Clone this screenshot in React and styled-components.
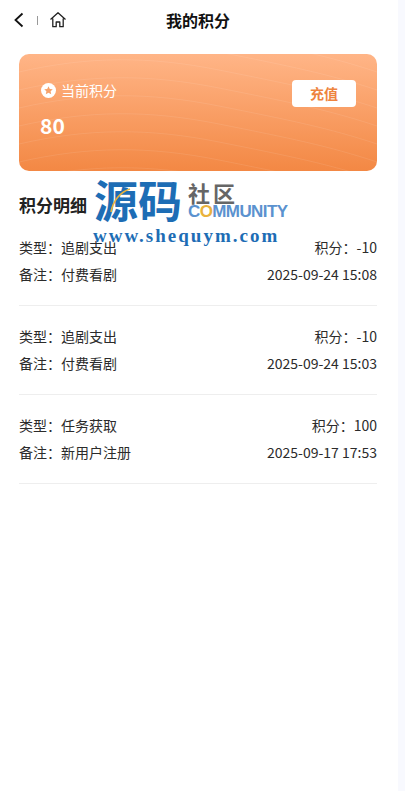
import React from "react";
import styled, { createGlobalStyle } from "styled-components";

const Global = createGlobalStyle`
  html, body { margin: 0; padding: 0; background: #f8f9fe; }
  body { font-family: "Noto Sans CJK SC", "Noto Sans", sans-serif; }
`;
const Page = styled.div`
  position: relative; width: 398px; height: 791px; background: #fff; overflow: hidden; color: #222;
`;
const Header = styled.header`
  height: 40px; display: flex; align-items: center; position: relative; justify-content: center;
`;
const Title = styled.h1`
  margin: 0 2px 0 0; font-size: 16px; font-weight: 700; color: #111; line-height: 40px;
`;
const NavIcons = styled.div`
  position: absolute; left: 13px; top: 9px; display: flex; align-items: center; height: 22px;
`;
const Sep = styled.span`
  width: 1px; height: 9px; background: #999; margin: 0 11px 0 11px;
`;
const Card = styled.section`
  position: relative; margin: 14px 21px 0 19px; height: 117px; border-radius: 10px; overflow: hidden;
  background: linear-gradient(180deg, #ffb587 0%, #f38844 100%);
`;
const Waves = styled.svg`
  position: absolute; inset: 0; width: 100%; height: 100%;
`;
const CardBody = styled.div`
  position: relative; display: flex; justify-content: space-between; align-items: flex-start; padding: 26px 21px 0 21px;
`;
const Label = styled.div`
  display: flex; align-items: center; gap: 5px; margin-left: 1px; font-size: 14px; line-height: 20px; color: #fff;
`;
const Amount = styled.div`
  font-size: 21px; font-weight: 700; color: #fff; line-height: 28px; margin-top: 11px;
`;
const Charge = styled.button`
  width: 64px; height: 27px; border: 0; border-radius: 4px; background: #fff; color: #ee843e;
  font: 700 14px/27px "Noto Sans CJK SC", sans-serif; padding: 0;
`;
const SectionTitle = styled.h2`
  margin: 22px 0 0 19px; font-size: 17px; font-weight: 700; line-height: 24px; color: #222;
`;
const List = styled.div`
  margin: 20px 21px 0 19px;
`;
const Record = styled.div`
  height: 68px; margin-bottom: 20px; border-bottom: 1px solid #eee;
  display: flex; flex-direction: column; gap: 7px;
`;
const Row = styled.div`
  display: flex; justify-content: space-between; font-size: 14px; line-height: 20px; color: #2b2b2b;
`;
const Mark = styled.div`
  position: absolute; left: 93px; top: 178px; width: 200px; height: 70px; pointer-events: none;
`;
const MarkMain = styled.div`
  position: absolute; left: 1px; top: -10px; font-size: 44px; font-weight: 700; line-height: 62px; color: #1d6db5; white-space: nowrap;
`;
const MarkArc = styled.svg`
  position: absolute; left: 12px; top: 8px;
`;
const MarkShe = styled.div`
  position: absolute; left: 95px; top: 1px; font-size: 22px; font-weight: 700; letter-spacing: 3px; line-height: 26px; color: #666; white-space: nowrap;
`;
const MarkCom = styled.div`
  position: absolute; left: 95px; top: 24px; font: 700 17px/20px "Liberation Sans", sans-serif; letter-spacing: -0.6px; color: #5b92cf; white-space: nowrap;
  & > b { color: #e9b23c; }
`;
const MarkUrl = styled.div`
  position: absolute; left: 0; top: 47px; font: 700 19px/22px "Liberation Serif", serif; letter-spacing: 2px; color: #1d6db5; white-space: nowrap;
`;

const records = [
  ["追剧支出", "-10", "付费看剧", "2025-09-24 15:08"],
  ["追剧支出", "-10", "付费看剧", "2025-09-24 15:03"],
  ["任务获取", "100", "新用户注册", "2025-09-17 17:53"],
];

const wavePaths = [-30, -12, 6, 24, 42, 60, 78, 96, 114];

export default function App() {
  return (
    <Page>
      <Global />
      <Header>
        <NavIcons>
          <svg width="13" height="16" viewBox="0 0 13 16" fill="none" stroke="#111" strokeWidth="1.8">
            <path d="M9.5 1.5 2.5 8l7 6.5" />
          </svg>
          <Sep />
          <svg width="18" height="18" viewBox="0 0 18 18" fill="none" stroke="#222" strokeWidth="1.3" strokeLinejoin="round">
            <path d="M1.5 8.5 9 1.8l7.5 6.7M3.8 7.5v8.2h3.4v-4.7h3.6v4.7h3.4V7.5" />
          </svg>
        </NavIcons>
        <Title>我的积分</Title>
      </Header>
      <Card>
        <Waves viewBox="0 0 358 117" preserveAspectRatio="none" fill="none" stroke="#fff" strokeOpacity="0.09">
          {wavePaths.map((y) => (
            <path key={y} d={`M0 ${y + 12}C70 ${y - 4} 130 ${y - 4} 200 ${y + 10}S310 ${y + 32} 358 ${y + 48}`} />
          ))}
        </Waves>
        <CardBody>
          <div>
            <Label>
              <svg width="15" height="15" viewBox="0 0 15 15">
                <circle cx="7.5" cy="7.5" r="7.5" fill="#fff" />
                <path d="M7.5 3.2l1.3 2.7 3 .4-2.2 2 .6 3-2.7-1.5-2.7 1.5.6-3-2.2-2 3-.4z" fill="#f6a26b" />
              </svg>
              当前积分
            </Label>
            <Amount>80</Amount>
          </div>
          <Charge>充值</Charge>
        </CardBody>
      </Card>
      <SectionTitle>积分明细</SectionTitle>
      <List>
        {records.map((r, i) => (
          <Record key={i}>
            <Row>
              <span>类型：{r[0]}</span>
              <span>积分：{r[1]}</span>
            </Row>
            <Row>
              <span>备注：{r[2]}</span>
              <span>{r[3]}</span>
            </Row>
          </Record>
        ))}
      </List>
      <Mark>
        <MarkMain>源码</MarkMain>
        <MarkArc width="30" height="30" viewBox="0 0 30 30" fill="none" stroke="#e9b23c" strokeWidth="1.6">
          <path d="M6 26C8 15 15 6 25 3" />
        </MarkArc>
        <MarkShe>社区</MarkShe>
        <MarkCom>C<b>O</b>MMUNITY</MarkCom>
        <MarkUrl>www.shequym.com</MarkUrl>
      </Mark>
    </Page>
  );
}
